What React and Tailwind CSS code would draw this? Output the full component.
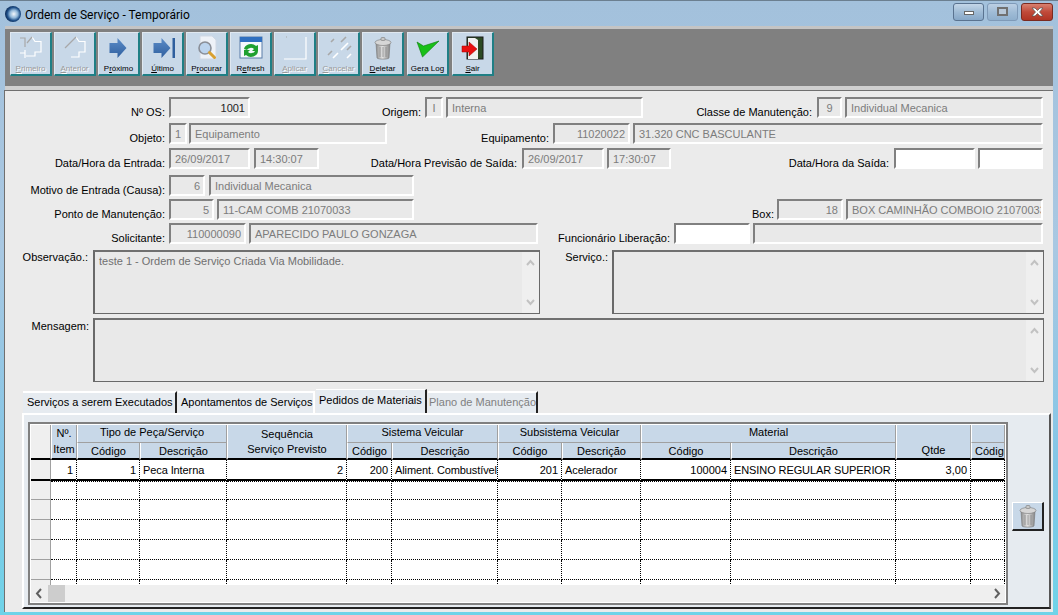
import React from "react";

const font = { fontFamily: '"Liberation Sans", Arial, sans-serif' };

function ArrowIcon({ last }) {
  return (
    <svg width="28" height="24" viewBox="0 0 28 24">
      <defs>
        <linearGradient id="arrowBlue" x1="0" y1="0" x2="0" y2="1">
          <stop offset="0" stopColor="#5b8cc8" />
          <stop offset="1" stopColor="#2f5f9e" />
        </linearGradient>
      </defs>
      <path d="M4.500 7h8V2l9 10-9 10v-5h-8z" fill="url(#arrowBlue)" />
      {last && <rect x="23.500" y="2" width="2.500" height="20" fill="#2f5f9e" />}
    </svg>
  );
}

function DisabledIcon({ kind }) {
  if (kind === "primeiro") {
    return (
      <svg width="24" height="24" viewBox="0 0 24 24" fill="none">
        <path d="M13 1l3 4.500h6V16h-6v4H7M6 14v8M1 17h5" stroke="#fff" strokeWidth="1.2" />
        <path d="M1 2h5v9M8 7l5-6" stroke="#a8a8a8" strokeWidth="1.2" />
      </svg>
    );
  }
  if (kind === "anterior") {
    return (
      <svg width="24" height="24" viewBox="0 0 24 24" fill="none">
        <path d="M13 1l3 4.500h6V16h-6v5H8" stroke="#fff" strokeWidth="1.2" />
        <path d="M2 12L13 1" stroke="#a8a8a8" strokeWidth="1.2" />
      </svg>
    );
  }
  if (kind === "aplicar") {
    return (
      <svg width="24" height="24" viewBox="0 0 24 24" fill="none">
        <path d="M1 23h22V1" stroke="#fff" strokeWidth="1.2" />
        <path d="M3 1h1" stroke="#a8a8a8" strokeWidth="1.2" />
      </svg>
    );
  }
  return (
    <svg width="26" height="24" viewBox="0 0 26 24" fill="none">
      <path d="M8 3l-3 3M20 1l-5 5M6 15l-4 4M25 10l-4 4" stroke="#a8a8a8" strokeWidth="1.6" />
      <path d="M22 7L15 14M12 17l-5 5M25 18l-4 4" stroke="#fff" strokeWidth="1.6" />
    </svg>
  );
}

function SearchIcon() {
  return (
    <svg width="24" height="26" viewBox="0 0 24 26">
      <path d="M5 1h12l4 4v19H5z" fill="#eef2f8" stroke="#d0d8e4" />
      <circle cx="10" cy="13" r="6" fill="#bcd4ee" stroke="#8a8f98" strokeWidth="1.6" />
      <path d="M14.500 17.500l5 5" stroke="#d8a030" strokeWidth="3" strokeLinecap="round" />
    </svg>
  );
}

function RefreshIcon() {
  return (
    <svg width="24" height="24" viewBox="0 0 24 24">
      <rect x="1" y="1" width="22" height="21" fill="#f4f8fc" stroke="#5a7ca8" />
      <rect x="1" y="1" width="22" height="5" fill="#2f6fc0" />
      <path d="M5 13a7 6 0 0 1 12-3l2-1v6h-6l2-2a4 3 0 0 0-7 1z" fill="#1fa030" />
      <path d="M19 15a7 6 0 0 1-12 4l-2 1v-6h6l-2 2a4 3 0 0 0 7-1z" fill="#1fa030" />
    </svg>
  );
}

function TrashIcon() {
  return (
    <svg width="18" height="24" viewBox="0 0 18 24">
      <defs>
        <linearGradient id="trashGrey" x1="0" y1="0" x2="1" y2="0">
          <stop offset="0" stopColor="#8c8c8c" />
          <stop offset="0.45" stopColor="#e2e2e2" />
          <stop offset="1" stopColor="#858585" />
        </linearGradient>
      </defs>
      <path d="M2 7h14l-1 15c-1 1.500-11 1.500-12 0z" fill="url(#trashGrey)" stroke="#777" strokeWidth="0.6" />
      <ellipse cx="9" cy="6.500" rx="8" ry="3" fill="#d6d6d6" stroke="#777" strokeWidth="0.6" />
      <rect x="7" y="1.500" width="4" height="3" rx="1" fill="#c8c8c8" stroke="#777" strokeWidth="0.6" />
      <path d="M6 11v10M9 11v10M12 11v10" stroke="#8a8a8a" strokeWidth="0.8" />
    </svg>
  );
}

function CheckIcon() {
  return (
    <svg width="24" height="20" viewBox="0 0 24 20">
      <path d="M1 4l6.500 4L23 3 6.500 19z" fill="#18c018" stroke="#0c7a0c" strokeWidth="0.6" />
    </svg>
  );
}

function ExitIcon() {
  return (
    <svg width="24" height="24" viewBox="0 0 24 24">
      <rect x="6" y="1" width="16" height="22" fill="#2c4a24" stroke="#1a1a1a" />
      <path d="M7 2h7l3 2v19H7z" fill="#f0f0f0" />
      <path d="M1 10h7V6l8 7-8 7v-4H1z" fill="#e81010" stroke="#a00000" strokeWidth="0.5" />
    </svg>
  );
}

function ToolButton({ children, label, mark, disabled, className = "" }) {
  const pos = label.indexOf(mark);
  return (
    <div className={`w-[42px] h-[44px] bg-[#c8d8e8] border-r-2 border-b-2 border-[#1f7f85] border-t border-l border-t-[#e0e8f0] border-l-[#e0e8f0] flex flex-col items-center shrink-0 ${className}`}>
      <div className="h-[30px] flex items-center justify-center">{children}</div>
      <div className={`text-[8px] leading-[10px] mt-[2px] whitespace-nowrap ${disabled ? "text-[#9a9a9a] [text-shadow:1px_1px_0_#fff]" : "text-black"}`}>
        {mark ? (
          <>
            {label.slice(0, pos)}
            <u>{mark}</u>
            {label.slice(pos + mark.length)}
          </>
        ) : (
          label
        )}
      </div>
    </div>
  );
}

function Lbl({ className = "", children }) {
  return <div className={`text-right text-[11px] leading-[14px] pt-[8px] text-black whitespace-nowrap shrink-0 ${className}`}>{children}</div>;
}

function Fld({ className = "", right, center, white, dark, children }) {
  return (
    <div
      className={`h-[21px] border-2 border-t-[#808080] border-l-[#808080] border-r-white border-b-white text-[11px] leading-[14px] pt-[2px] whitespace-nowrap overflow-hidden shrink-0
        ${right || center ? "px-[3px]" : "pl-[4px] pr-[1px]"} ${white ? "bg-white" : "bg-[#e9e9e9]"} ${dark ? "text-[#222]" : "text-[#7c7c7c]"} ${right ? "text-right" : ""} ${center ? "text-center" : ""} ${className}`}
    >
      {children}
    </div>
  );
}

function Memo({ className = "", children }) {
  return (
    <div className={`h-[64px] bg-[#e9e9e9] border border-[#696969] border-t-2 border-l-2 border-t-[#707070] flex shrink-0 ${className}`}>
      <div className="flex-1 px-[4px] pt-[2px] text-[11px] leading-[14px] text-[#707070]">{children}</div>
      <div className="w-[17px] bg-[#efefef] flex flex-col justify-between items-center py-[7px]">
        <svg width="9" height="7" viewBox="0 0 9 7" fill="none">
          <path d="M1 6l3.500-4L8 6" stroke="#c2c2c2" strokeWidth="2" />
        </svg>
        <svg width="9" height="7" viewBox="0 0 9 7" fill="none">
          <path d="M1 1l3.500 4L8 1" stroke="#c2c2c2" strokeWidth="2" />
        </svg>
      </div>
    </div>
  );
}

function Tab({ className = "", active, muted, noEdge, children }) {
  return (
    <div
      className={`text-[11px] leading-[14px] whitespace-nowrap shrink-0 border-r-2 bg-[#e6ebf0] ${noEdge ? "border-r-white" : "border-r-[#222]"} ${active ? "h-[24px] pt-[3px] border-t border-t-white" : "h-[22px] pt-[2px] border-t-2 border-t-white"} ${muted ? "text-[#808080]" : "text-black"} ${className}`}
    >
      {children}
    </div>
  );
}

const thBase = "bg-[#c8d8e8] font-normal text-[11px] leading-[14px] text-black border-r border-l border-r-[#a0a0a0] border-l-white p-0 whitespace-nowrap overflow-hidden";
const thTop = `${thBase} h-[18px] align-top leading-[15px] border-b border-b-[#a0a0a0]`;
const thSub = `${thBase} h-[17px] border-b-2 border-b-black`;
const thBoth = `${thBase} border-b-2 border-b-black`;
const rowHead = "bg-[#efefef] border-r border-b border-r-[#a0a0a0] border-b-[#a0a0a0] p-0";

const colWidths = [20, 26, 63, 87, 120, 45, 106, 64, 79, 90, 165, 75, 34];

const firstRow = [
  ["1", true],
  ["1", true],
  ["Peca Interna", false],
  ["2", true],
  ["200", true],
  ["Aliment. Combustível", false],
  ["201", true],
  ["Acelerador", false],
  ["100004", true],
  ["ENSINO REGULAR SUPERIOR", false],
  ["3,00", true],
  ["", false],
];

function Grid() {
  return (
    <table className="table-fixed border-separate border-spacing-0 w-[974px]">
      <colgroup>
        {colWidths.map((w, i) => (
          <col key={i} style={{ width: w }} />
        ))}
      </colgroup>
      <thead>
        <tr>
          <th rowSpan={2} className="bg-[#efefef] border-r border-r-[#a0a0a0] border-b-2 border-b-black p-0"></th>
          <th rowSpan={2} className={thBoth}>
            <div className="leading-[15px]">Nº.</div>
            <div className="leading-[15px] mt-[1px]">Item</div>
          </th>
          <th colSpan={2} className={thTop}>Tipo de Peça/Serviço</th>
          <th rowSpan={2} className={thBoth}>
            <div className="leading-[15px]">Sequência</div>
            <div className="leading-[15px]">Serviço Previsto</div>
          </th>
          <th colSpan={2} className={thTop}>Sistema Veicular</th>
          <th colSpan={2} className={thTop}>Subsistema Veicular</th>
          <th colSpan={2} className={thTop}>Material</th>
          <th rowSpan={2} className={`${thBoth} align-bottom pb-[1px]`}>Qtde</th>
          <th className={thTop}></th>
        </tr>
        <tr>
          <th className={thSub}>Código</th>
          <th className={thSub}>Descrição</th>
          <th className={thSub}>Código</th>
          <th className={thSub}>Descrição</th>
          <th className={thSub}>Código</th>
          <th className={thSub}>Descrição</th>
          <th className={thSub}>Código</th>
          <th className={thSub}>Descrição</th>
          <th className={`${thSub} text-left pl-[3px]`}>Código</th>
        </tr>
      </thead>
      <tbody>
        <tr className="h-[21px]">
          <td className="bg-[#efefef] border-r border-b-2 border-r-[#a0a0a0] border-b-black p-0"></td>
          {firstRow.map(([text, right], i) => (
            <td
              key={i}
              className={`p-0 bg-white border-r border-r-black [border-right-style:dotted]! border-b-2 border-b-black text-[11px] leading-[14px] text-black whitespace-nowrap overflow-hidden ${right ? "text-right pr-[3px]" : "text-left pl-[3px] tracking-[-0.1px]"}`}
            >
              {text}
            </td>
          ))}
        </tr>
        {[19, 20, 20, 20, 20, 20].map((h, r) => (
          <tr key={r} style={{ height: h }}>
            <td className={rowHead}></td>
            {firstRow.map((_, i) => (
              <td key={i} className={`p-0 bg-white border-r border-b border-dotted border-black ${r === 0 ? "border-t" : ""}`}></td>
            ))}
          </tr>
        ))}
      </tbody>
    </table>
  );
}

export default function App() {
  return (
    <div style={font} className="w-[1058px] h-[615px] overflow-hidden flex flex-col bg-[linear-gradient(to_bottom,#a3c1dc,#a9c8e2_40%,#84c6e6_75%,#6fd3e8)] border-t border-t-[#6b7f90] pl-[5px] pr-[5px] pb-[3px]">
      {/* title bar */}
      <div className="h-[25px] flex items-center shrink-0 relative">
        <svg width="16" height="16" viewBox="0 0 16 16" className="shrink-0">
          <defs>
            <radialGradient id="logoBall" cx="0.55" cy="0.5" r="0.55">
              <stop offset="0" stopColor="#f4f8fc" />
              <stop offset="0.45" stopColor="#8fb6d8" />
              <stop offset="0.75" stopColor="#1f4f88" />
              <stop offset="1" stopColor="#0c2a55" />
            </radialGradient>
          </defs>
          <circle cx="8" cy="8" r="8" fill="url(#logoBall)" />
        </svg>
        <span className="ml-[4px] text-[12px] text-black mt-[2px]" style={{ fontFamily: 'Roboto, "Noto Sans", sans-serif' }}>
          Ordem de Serviço - Temporário
        </span>
        <div className="ml-auto flex items-start gap-[3px] -mt-[4px]">
          <div className="w-[31px] h-[18px] rounded-[3px] border border-[#5a7390] bg-[linear-gradient(to_bottom,#c4d6e8,#a0bcd6_50%,#87a8c8)] flex items-center justify-center">
            <div className="w-[10px] h-[4px] mt-[3px] bg-white border border-[#666]"></div>
          </div>
          <div className="w-[31px] h-[18px] rounded-[3px] border border-[#7f9ab8] bg-[linear-gradient(to_bottom,#bcd0e4,#a0bcd6_50%,#8fafcd)] flex items-center justify-center">
            <div className="w-[11px] h-[9px] border-2 border-[#707070] bg-[#b8c8d8]"></div>
          </div>
          <div className="w-[32px] h-[18px] rounded-[3px] border border-[#7a2a20] bg-[linear-gradient(to_bottom,#d8806f,#c04a3a_50%,#b03424)] flex items-center justify-center">
            <svg width="13" height="10" viewBox="0 0 13 10">
              <path d="M1 1h3l2.500 2.500L9 1h3L8.500 5 12 9H9L6.500 6.500 4 9H1l3.500-4z" fill="#fff" stroke="#555" strokeWidth="0.7" />
            </svg>
          </div>
        </div>
      </div>

      {/* toolbar */}
      <div className="h-[64px] shrink-0 bg-[#808080] border-t-[3px] border-t-[#c4c4c4] border-b-[4px] border-b-[#cfcfcf] pl-[5px] pt-[3px] flex gap-[1px]">
        <ToolButton label="Primeiro" mark="P" disabled><DisabledIcon kind="primeiro" /></ToolButton>
        <ToolButton label="Anterior" mark="A" disabled className="ml-[1px]"><DisabledIcon kind="anterior" /></ToolButton>
        <ToolButton label="Próximo" mark="r" className="ml-[1px]"><ArrowIcon /></ToolButton>
        <ToolButton label="Último" mark="Ú" className="ml-[1px]"><ArrowIcon last /></ToolButton>
        <ToolButton label="Procurar" mark="r" className="ml-[1px]"><SearchIcon /></ToolButton>
        <ToolButton label="Refresh" mark="e" className="ml-[1px]"><RefreshIcon /></ToolButton>
        <ToolButton label="Aplicar" mark="A" disabled className="ml-[1px]"><DisabledIcon kind="aplicar" /></ToolButton>
        <ToolButton label="Cancelar" mark="C" disabled className="ml-[1px]"><DisabledIcon kind="cancelar" /></ToolButton>
        <ToolButton label="Deletar" mark="D" className="ml-[1px]"><TrashIcon /></ToolButton>
        <ToolButton label="Gera Log" className="ml-[2px]"><CheckIcon /></ToolButton>
        <ToolButton label="Sair" mark="S" className="ml-[2px]"><ExitIcon /></ToolButton>
      </div>

      {/* form */}
      <div className="flex-1 bg-[#ebebeb] border-t border-t-[#707070] border-l border-l-[#707070] -ml-[1px] flex flex-col pt-[6px] min-h-0">
        <div className="flex h-[21px]">
          <Lbl className="w-[160px]">Nº OS:</Lbl>
          <Fld right dark className="ml-[4px] w-[81px]">1001</Fld>
          <Lbl className="w-[171px]">Origem:</Lbl>
          <Fld center className="ml-[4px] w-[18px]">I</Fld>
          <Fld className="ml-[3px] w-[197px]">Interna</Fld>
          <Lbl className="w-[169px]">Classe de Manutenção:</Lbl>
          <Fld center className="ml-[5px] w-[25px]">9</Fld>
          <Fld className="ml-[3px] w-[198px]">Individual Mecanica</Fld>
        </div>
        <div className="flex h-[21px] mt-[5px]">
          <Lbl className="w-[160px]">Objeto:</Lbl>
          <Fld center className="ml-[4px] w-[18px]">1</Fld>
          <Fld className="ml-[2px] w-[198px]">Equipamento</Fld>
          <Lbl className="w-[162px]">Equipamento:</Lbl>
          <Fld right className="ml-[4px] w-[77px]">11020022</Fld>
          <Fld className="ml-[3px] w-[410px]">31.320 CNC BASCULANTE</Fld>
        </div>
        <div className="flex h-[21px] mt-[4px]">
          <Lbl className="w-[160px]">Data/Hora da Entrada:</Lbl>
          <Fld className="ml-[4px] w-[81px]">26/09/2017</Fld>
          <Fld className="ml-[4px] w-[65px]">14:30:07</Fld>
          <Lbl className="w-[198px]">Data/Hora Previsão de Saída:</Lbl>
          <Fld className="ml-[5px] w-[82px]">26/09/2017</Fld>
          <Fld className="ml-[3px] w-[64px]">17:30:07</Fld>
          <Lbl className="w-[218px]">Data/Hora da Saída:</Lbl>
          <Fld white className="ml-[5px] w-[81px]"></Fld>
          <Fld white className="ml-[3px] w-[65px]"></Fld>
        </div>
        <div className="flex h-[21px] mt-[6px]">
          <Lbl className="w-[160px]">Motivo de Entrada (Causa):</Lbl>
          <Fld right className="ml-[4px] w-[36px]">6</Fld>
          <Fld className="ml-[4px] w-[205px]">Individual Mecanica</Fld>
        </div>
        <div className="flex h-[21px] mt-[3px]">
          <Lbl className="w-[160px]">Ponto de Manutenção:</Lbl>
          <Fld right className="ml-[4px] w-[45px]">5</Fld>
          <Fld className="ml-[3px] w-[197px]">11-CAM COMB 21070033</Fld>
          <Lbl className="w-[360px]">Box:</Lbl>
          <Fld right className="ml-[3px] w-[66px]">18</Fld>
          <Fld className="ml-[3px] w-[197px]">BOX CAMINHÃO COMBOIO 21070033</Fld>
        </div>
        <div className="flex h-[21px] mt-[3px]">
          <Lbl className="w-[160px]">Solicitante:</Lbl>
          <Fld right className="ml-[4px] w-[77px]">110000090</Fld>
          <Fld className="ml-[3px] w-[289px]">APARECIDO PAULO GONZAGA</Fld>
          <Lbl className="w-[132px]">Funcionário Liberação:</Lbl>
          <Fld white className="ml-[4px] w-[76px]"></Fld>
          <Fld className="ml-[3px] w-[290px]"></Fld>
        </div>
        <div className="flex mt-[6px]">
          <div className="w-[83px] text-right text-[11px] leading-[14px] shrink-0">Observação.:</div>
          <Memo className="ml-[5px] w-[447px]">teste 1 - Ordem de Serviço Criada Via Mobilidade.</Memo>
          <div className="w-[68px] text-right text-[11px] leading-[14px] shrink-0">Serviço.:</div>
          <Memo className="ml-[4px] w-[432px]"></Memo>
        </div>
        <div className="flex mt-[4px]">
          <div className="w-[84px] pt-[1px] text-right text-[11px] leading-[14px] shrink-0">Mensagem:</div>
          <Memo className="ml-[4px] w-[951px]"></Memo>
        </div>

        {/* tabs */}
        <div className="flex items-end ml-[18px] mt-[7px] h-[24px]">
          <Tab className="w-[154px] pl-[4px]">Serviços a serem Executados</Tab>
          <Tab noEdge className="ml-[1px] w-[137px] pl-[3px]">Apontamentos de Serviços</Tab>
          <Tab active className="ml-[1px] w-[111px] pl-[3px]">Pedidos de Materiais</Tab>
          <Tab muted className="ml-[1px] w-[110px] pl-[1px]">Plano de Manutenção</Tab>
        </div>

        <div className="ml-[17px] mr-[2px] flex-1 min-h-0 bg-[#e6ebf0] border-t-2 border-l-2 border-t-white border-l-white border-r-2 border-b-2 border-r-[#555] border-b-[#222] pl-[4px] pt-[7px] mb-[3px] flex">
          <div className="w-[980px] h-[183px] border-2 border-[#808080] p-[1px] bg-white flex flex-col shrink-0">
            <div className="h-[161px] overflow-hidden">
              <Grid />
            </div>
            <div className="h-[17px] bg-[#efefef] flex items-center justify-between shrink-0">
              <div className="flex items-center">
                <svg width="17" height="17" viewBox="0 0 17 17" fill="none">
                  <path d="M10 4l-4 4.500 4 4.500" stroke="#606060" strokeWidth="2" />
                </svg>
                <div className="w-[17px] h-[17px] bg-[#cdcdcd]"></div>
              </div>
              <svg width="17" height="17" viewBox="0 0 17 17" fill="none">
                <path d="M7 4l4 4.500-4 4.500" stroke="#606060" strokeWidth="2" />
              </svg>
            </div>
          </div>
          <div className="ml-[4px] mt-[80px] w-[32px] h-[29px] bg-[#c8d8e8] border-r-2 border-b-2 border-r-[#222] border-b-[#222] border-t border-l border-t-white border-l-white flex items-center justify-center shrink-0">
            <TrashIcon />
          </div>
        </div>
      </div>
    </div>
  );
}
